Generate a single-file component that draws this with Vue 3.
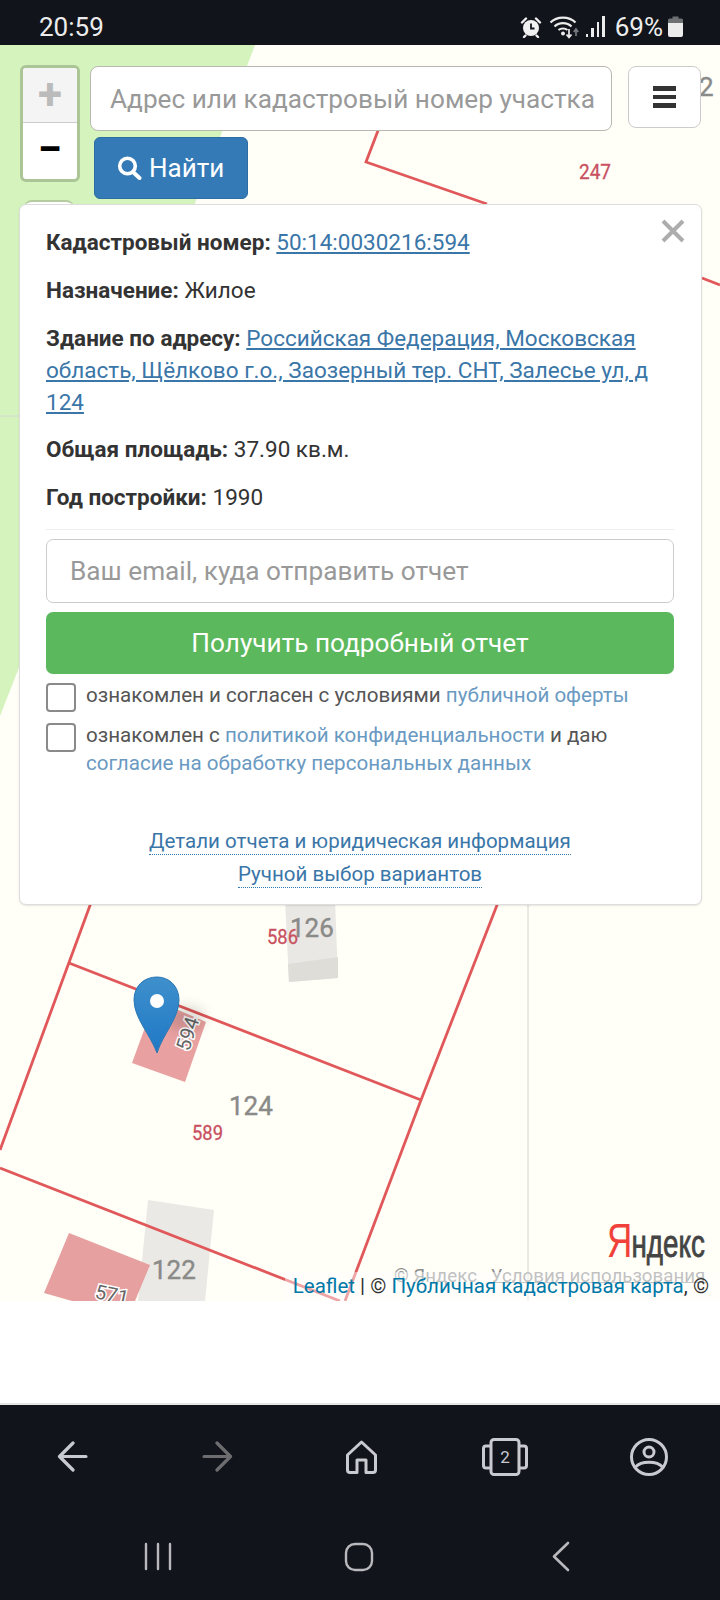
<template>
  <div class="screen">
    <header class="status">
      <span class="time">20:59</span>
      <div class="status-right">
        <svg class="alarm" width="22" height="22" viewBox="0 0 22 22">
          <circle cx="11" cy="12" r="8" fill="#f1f1f1" />
          <path d="M11 7.500V12.500H14.500" fill="none" stroke="#11141b" stroke-width="1.800" />
          <path d="M2 6.500L6 2.500M20 6.500L16 2.500M5.500 19.500L4 21M16.500 19.500L18 21" stroke="#f1f1f1" stroke-width="2.400" stroke-linecap="round" />
        </svg>
        <svg class="wifi" width="32" height="24" viewBox="0 0 32 24">
          <path d="M1.500 7.500C8 1 20 1 26.500 7.500M5.500 11.500C10 7 18 7 22.500 11.500M9.500 15C12 13 16 13 18.500 15" fill="none" stroke="#ececec" stroke-width="2.200" />
          <circle cx="14" cy="18.500" r="2" fill="#ececec" />
          <path d="M20 14V22M17.500 19.500L20 22.500L22.500 19.500" fill="none" stroke="#ececec" stroke-width="1.700" />
          <path d="M27 21V15M24.800 17L27 14L29.200 17" fill="none" stroke="#77797d" stroke-width="1.700" />
        </svg>
        <div class="bars">
          <i class="b1" /><i class="b2" /><i class="b3" /><i class="b4" />
        </div>
        <span class="pct">69%</span>
        <svg class="battery" width="15" height="21" viewBox="0 0 15 21">
          <path d="M4.500 0.500H10.500V2.500H13.500Q15 2.500 15 4V7H0V4Q0 2.500 1.500 2.500H4.500Z" fill="#6f7074" />
          <path d="M0 7H15V19Q15 21 13 21H2Q0 21 0 19Z" fill="#ececec" />
        </svg>
      </div>
    </header>

    <main class="map">
      <svg class="tiles" width="720" height="1256" viewBox="0 45 720 1256">
        <rect x="0" y="45" width="720" height="1256" fill="#fffef7" />
        <polygon points="0,45 255,45 18,670 0,716" fill="#d4f3bd" />
        <path d="M0 416H20" stroke="#d6d6d0" />
        <path d="M528 900V1301" stroke="#d4d4d0" />

        <polygon points="285,900 335,900 338,978 289,982" fill="#eae8e4" />
        <polygon points="288,964 338,957 338,978 289,982" fill="#dfddd7" />
        <polygon points="148,1200 214,1210 205,1301 138,1301" fill="#ebe9e5" />
        <polygon points="155,1000 206,1022 185,1082 132,1063" fill="#e8a1a0" />
        <polygon points="69,1233 150,1265 135,1301 72,1301 44,1293" fill="#e6a09f" />

        <g fill="none" stroke="#e0585a" stroke-width="2.800">
          <path d="M379 128L366 162L487 204M702 278L720 285" />
          <path d="M92 900L0 1150M69 963L421 1100M499 900L421 1100L345 1301M0 1168L340 1301" />
        </g>

        <g class="grey-label">
          <text x="290" y="937">126</text>
          <text x="229" y="1115">124</text>
          <text x="152" y="1279">122</text>
          <text x="699" y="96">2</text>
        </g>
        <g class="red-label">
          <text x="579" y="179" textLength="32" lengthAdjust="spacingAndGlyphs">247</text>
          <text x="267" y="944" textLength="31" lengthAdjust="spacingAndGlyphs">586</text>
          <text x="192" y="1140" textLength="31" lengthAdjust="spacingAndGlyphs">589</text>
        </g>
        <text class="halo" transform="translate(189 1052) rotate(-72)" x="0" y="0">594</text>
        <text class="halo" transform="translate(94 1298) rotate(12)" x="0" y="0">571</text>

        <ellipse cx="186" cy="1018" rx="20" ry="13" fill="#000" opacity="0.12" filter="url(#soft)" />
        <defs>
          <filter id="soft" x="-50%" y="-50%" width="200%" height="200%">
            <feGaussianBlur stdDeviation="6" />
          </filter>
          <linearGradient id="pin" x1="0" y1="0" x2="0" y2="1">
            <stop offset="0" stop-color="#3f90cb" />
            <stop offset="1" stop-color="#1f78c6" />
          </linearGradient>
        </defs>
        <path d="M157 1053C150 1034 134 1018 134 1000C134 986 144 977 157 977C169 977 179 986 179 1000C179 1018 163 1034 157 1053Z" fill="url(#pin)" stroke="#2c78b4" />
        <circle cx="157" cy="1001" r="7" fill="#fff" />

        <text class="ya" transform="translate(607 1257) scale(0.73 1)"><tspan fill="#f0413b">Я</tspan><tspan class="ya-rest" dx="-1" font-size="38">ндекс</tspan></text>
        <text class="ya-copy" x="394" y="1282">© Яндекс&#160;&#160;&#160;Условия использования</text>
        <path d="M489 1282.500H706" stroke="#999" />
      </svg>

      <div class="attribution">
        <a class="attr-link">Leaflet</a> | © <a class="attr-link">Публичная кадастровая карта</a>, ©
      </div>

      <div class="controls">
        <div class="zoom">
          <div class="zoom-btn off">+</div>
          <div class="zoom-btn">−</div>
        </div>
        <div class="search-col">
          <input class="search" placeholder="Адрес или кадастровый номер участка" />
          <button class="find">
            <svg width="25" height="24" viewBox="0 0 25 24">
              <circle cx="10.500" cy="10" r="7.800" fill="none" stroke="#fff" stroke-width="3.600" />
              <path d="M16 16L22.500 22" stroke="#fff" stroke-width="4" stroke-linecap="round" />
            </svg>
            Найти
          </button>
        </div>
        <button class="burger"><i /><i /><i /></button>
      </div>

      <div class="layer-tab" />

      <section class="card">
        <svg class="close" width="24" height="24" viewBox="0 0 24 24">
          <path d="M2 2L22 22M22 2L2 22" stroke="#adadad" stroke-width="4" />
        </svg>
        <p><b>Кадастровый номер:</b> <a>50:14:0030216:594</a></p>
        <p><b>Назначение:</b> Жилое</p>
        <p><b>Здание по адресу:</b> <a>Российская Федерация, Московская область, Щёлково г.о., Заозерный тер. СНТ, Залесье ул, д 124</a></p>
        <p><b>Общая площадь:</b> 37.90 кв.м.</p>
        <p><b>Год постройки:</b> 1990</p>
        <hr />
        <input class="email" placeholder="Ваш email, куда отправить отчет" />
        <button class="report">Получить подробный отчет</button>
        <div class="check">
          <span class="box" />
          <span class="check-text">ознакомлен и согласен с условиями <a>публичной оферты</a></span>
        </div>
        <div class="check">
          <span class="box" />
          <span class="check-text">ознакомлен с <a>политикой конфиденциальности</a> и даю <a>согласие на обработку персональных данных</a></span>
        </div>
        <div class="more">
          <a>Детали отчета и юридическая информация</a>
          <a>Ручной выбор вариантов</a>
        </div>
      </section>
    </main>

    <div class="blank" />

    <footer class="nav">
      <div class="browser-bar">
        <svg width="31" height="31" viewBox="0 0 31 31" fill="none" stroke="#c9c9d0" stroke-width="3.200" stroke-linecap="round" stroke-linejoin="round">
          <path d="M29 15.500H3M16 2L2.500 15.500L16 29" />
        </svg>
        <svg width="31" height="31" viewBox="0 0 31 31" fill="none" stroke="#6d6d70" stroke-width="3.200" stroke-linecap="round" stroke-linejoin="round">
          <path d="M2 15.500H28M15 2L28.500 15.500L15 29" />
        </svg>
        <svg width="33" height="34" viewBox="0 0 33 34" fill="none" stroke="#c9c9d0" stroke-width="3" stroke-linejoin="round">
          <path d="M16.500 2L30.500 15V30Q30.500 32.500 28 32.500H21V20H12V32.500H5Q2.500 32.500 2.500 30V15Z" />
        </svg>
        <svg width="46" height="38" viewBox="0 0 46 38" fill="none" stroke="#c9c9d0" stroke-width="3">
          <rect x="9" y="1.500" width="28" height="35" rx="3" />
          <path d="M9 8H4Q1.500 8 1.500 10.500V27.500Q1.500 30 4 30H9M37 8H42Q44.500 8 44.500 10.500V27.500Q44.500 30 42 30H37" />
          <text class="tab-count" x="23" y="25">2</text>
        </svg>
        <svg width="38" height="38" viewBox="0 0 38 38" fill="none" stroke="#c9c9d0" stroke-width="3">
          <circle cx="19" cy="19" r="17.500" />
          <circle cx="19" cy="14" r="5" />
          <path d="M5.500 29C11 22.500 27 22.500 32.500 29" />
        </svg>
      </div>
      <div class="system-bar">
        <svg width="28" height="29" viewBox="0 0 28 29" stroke="#b9b9bd" stroke-width="2.400" stroke-linecap="round">
          <path d="M2 2V27M14 2V27M26 2V27" />
        </svg>
        <svg width="30" height="30" viewBox="0 0 30 30" fill="none" stroke="#b9b9bd" stroke-width="2.400">
          <rect x="2" y="2" width="26" height="26" rx="9" />
        </svg>
        <svg width="18" height="31" viewBox="0 0 18 31" fill="none" stroke="#b9b9bd" stroke-width="2.600" stroke-linecap="round" stroke-linejoin="round">
          <path d="M16 2L2 15.500L16 29" />
        </svg>
      </div>
    </footer>
  </div>
</template>

<script setup>
</script>

<style>
html,
body {
  margin: 0;
  background: #fff;
}
</style>

<style scoped>
.screen {
  width: 720px;
  height: 1600px;
  display: flex;
  flex-direction: column;
  overflow: hidden;
  font-family: Roboto, "Noto Sans", sans-serif;
  color: #333;
}

.status {
  height: 45px;
  flex: none;
  background: #11141b;
  color: #ececec;
  display: flex;
  justify-content: space-between;
  align-items: center;
  padding: 8px 37px 0 39px;
  box-sizing: border-box;
}

.time {
  font-size: 26px;
}

.status-right {
  display: flex;
  align-items: center;
}

.wifi {
  margin-left: 7px;
}

.bars {
  display: flex;
  align-items: flex-end;
  gap: 3px;
  height: 21px;
  margin-left: 5px;
}

.bars i {
  display: block;
  width: 2.500px;
  background: #ececec;
}

.b1 {
  height: 3px;
}

.b2 {
  height: 9px;
}

.b3 {
  height: 15px;
}

.b4 {
  height: 21px;
}

.pct {
  font-size: 26px;
  margin-left: 10px;
}

.battery {
  margin-left: 5px;
}

.map {
  position: relative;
  height: 1256px;
  flex: none;
  overflow: hidden;
}

.tiles {
  position: absolute;
  inset: 0;
}

.grey-label {
  font-size: 26px;
  fill: #8a8a88;
  stroke: #8a8a88;
  stroke-width: 0.4px;
}

.red-label {
  font-size: 20px;
  fill: #c8505f;
  stroke: #c8505f;
  stroke-width: 0.3px;
}

.halo {
  font-size: 20px;
  fill: #666;
  stroke: #fff;
  stroke-width: 3px;
  paint-order: stroke;
}

.ya {
  font-family: "Liberation Sans", sans-serif;
  font-size: 48px;
}

.ya-rest {
  fill: #444;
  stroke: #444;
  stroke-width: 0.8px;
}

.ya-copy {
  font-size: 18.700px;
  fill: #8e8e8e;
}

.attribution {
  position: absolute;
  right: 0;
  bottom: 0;
  height: 29px;
  line-height: 29px;
  padding: 0 11px 0 8px;
  font-size: 20.500px;
  white-space: nowrap;
  background: rgba(255, 255, 255, 0.45);
}

.attr-link {
  color: #0078a8;
}

.controls {
  position: absolute;
  left: 20px;
  top: 20px;
  width: 681px;
  display: flex;
  align-items: flex-start;
}

.zoom {
  width: 54px;
  height: 111px;
  flex: none;
  border: 3px solid #acc597;
  border-radius: 6px;
  overflow: hidden;
  background: #fff;
}

.zoom-btn {
  height: 55px;
  line-height: 52px;
  text-align: center;
  font-size: 44px;
  font-weight: 700;
  color: #000;
  box-sizing: border-box;
}

.zoom-btn.off {
  background: #f4f4f4;
  color: #bbb;
  border-bottom: 1px solid #ccc;
}

.search-col {
  width: 522px;
  margin: 1px 0 0 10px;
  flex: none;
}

.search {
  display: block;
  width: 100%;
  height: 65px;
  box-sizing: border-box;
  padding: 0 10px 0 19px;
  border: 1px solid #b8b8b0;
  border-radius: 8px;
  background: #fff;
  font: 26.200px Roboto, sans-serif;
  outline: none;
}

.search::placeholder,
.email::placeholder {
  color: #999;
  opacity: 1;
}

.find {
  display: flex;
  align-items: center;
  gap: 7px;
  width: 154px;
  height: 62px;
  margin: 6px 0 0 4px;
  padding: 0 0 0 22px;
  border: 1px solid #2e6da4;
  border-radius: 6px;
  background: #337ab7;
  color: #fff;
  font: 26px Roboto, sans-serif;
}

.burger {
  width: 73px;
  height: 62px;
  margin: 1px 0 0 16px;
  padding: 0;
  flex: none;
  display: flex;
  flex-direction: column;
  align-items: center;
  justify-content: center;
  gap: 4px;
  border: 1px solid #ccc;
  border-radius: 8px;
  background: #fff;
}

.burger i {
  display: block;
  width: 23px;
  height: 4.500px;
  background: #333;
}

.layer-tab {
  position: absolute;
  left: 24px;
  top: 155px;
  width: 50px;
  height: 12px;
  background: #fff;
  border-radius: 8px 8px 0 0;
  border-top: 2px solid #b5cca0;
  box-sizing: border-box;
}

.card {
  position: absolute;
  left: 19px;
  top: 159px;
  width: 683px;
  height: 701px;
  box-sizing: border-box;
  padding: 21px 27px 0 26px;
  background: #fff;
  border: 1px solid #ddd;
  border-radius: 7px;
  box-shadow: 0 1px 2px rgba(0, 0, 0, 0.1);
  font-size: 22.500px;
  line-height: 32px;
}

.close {
  position: absolute;
  right: 16px;
  top: 14px;
}

.card p {
  margin: 0 0 15.800px;
}

.card p a {
  color: #3a76a8;
  text-decoration: underline;
}

hr {
  margin: 0 0 9px;
  border: 0;
  border-top: 1px solid #eee;
}

.email {
  display: block;
  width: 100%;
  height: 64px;
  box-sizing: border-box;
  padding: 0 23px;
  border: 1px solid #ccc;
  border-radius: 7px;
  font: 26.200px Roboto, sans-serif;
  outline: none;
}

.report {
  display: block;
  width: 100%;
  height: 62px;
  margin-top: 9px;
  border: 0;
  border-radius: 7px;
  background: #5cb85c;
  color: #fff;
  font: 26.200px Roboto, sans-serif;
}

.check {
  display: flex;
  align-items: flex-start;
  gap: 10px;
  margin-top: 9px;
  font-size: 20.600px;
  line-height: 28.500px;
  color: #555;
}

.check + .check {
  margin-top: 11px;
}

.check-text {
  margin-top: -2px;
}

.check a {
  color: #6a9ac2;
}

.box {
  width: 30px;
  height: 29px;
  flex: none;
  box-sizing: border-box;
  border: 2px solid #8a8a8a;
  border-radius: 4px;
}

.more {
  display: flex;
  flex-direction: column;
  align-items: center;
  gap: 6px;
  margin-top: 50px;
  font-size: 20.550px;
  line-height: 26px;
}

.more a {
  color: #3a76a8;
  border-bottom: 1px dotted #337ab7;
}

.blank {
  flex: 1;
  background: #fff;
  border-bottom: 2px solid #e6e6e6;
}

.nav {
  height: 195px;
  flex: none;
  background: #11141b;
}

.browser-bar {
  height: 103px;
  display: grid;
  grid-template-columns: 145px 143px 137px 148px auto;
  align-items: center;
  padding-left: 57px;
}

.tab-count {
  font-size: 17px;
  fill: #c9c9d0;
  stroke: none;
  text-anchor: middle;
}

.system-bar {
  display: grid;
  grid-template-columns: 200px 208px auto;
  align-items: center;
  padding: 33px 0 0 144px;
}
</style>
